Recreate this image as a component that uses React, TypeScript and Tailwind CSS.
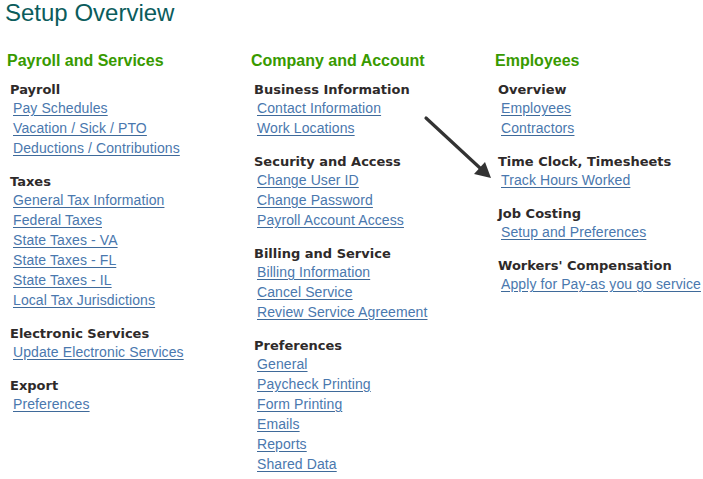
import React from "react";

type Group = { title: string; links: string[] };
type Column = { title: string; groups: Group[] };

const columns: Column[] = [
  {
    title: "Payroll and Services",
    groups: [
      { title: "Payroll", links: ["Pay Schedules", "Vacation / Sick / PTO", "Deductions / Contributions"] },
      {
        title: "Taxes",
        links: [
          "General Tax Information",
          "Federal Taxes",
          "State Taxes - VA",
          "State Taxes - FL",
          "State Taxes - IL",
          "Local Tax Jurisdictions",
        ],
      },
      { title: "Electronic Services", links: ["Update Electronic Services"] },
      { title: "Export", links: ["Preferences"] },
    ],
  },
  {
    title: "Company and Account",
    groups: [
      { title: "Business Information", links: ["Contact Information", "Work Locations"] },
      { title: "Security and Access", links: ["Change User ID", "Change Password", "Payroll Account Access"] },
      { title: "Billing and Service", links: ["Billing Information", "Cancel Service", "Review Service Agreement"] },
      {
        title: "Preferences",
        links: ["General", "Paycheck Printing", "Form Printing", "Emails", "Reports", "Shared Data"],
      },
    ],
  },
  {
    title: "Employees",
    groups: [
      { title: "Overview", links: ["Employees", "Contractors"] },
      { title: "Time Clock, Timesheets", links: ["Track Hours Worked"] },
      { title: "Job Costing", links: ["Setup and Preferences"] },
      { title: "Workers' Compensation", links: ["Apply for Pay-as you go service"] },
    ],
  },
];

export default function App() {
  return (
    <div
      className="relative w-[703px] h-[479px] bg-white overflow-hidden"
      style={{ fontFamily: '"Liberation Sans", Arial, sans-serif' }}
    >
      <h1 className="pl-[5px] text-[24px] leading-[25px] text-[#0b5c5c] font-normal">Setup Overview</h1>
      <div className="mt-[27px] pl-[7px] flex">
        {columns.map((col) => (
          <div key={col.title} className="w-[244px] shrink-0 flex flex-col">
            <h2 className="text-[16px] leading-[18px] font-bold text-[#389a00]">{col.title}</h2>
            <div className="mt-[11px] flex flex-col gap-[15px]">
              {col.groups.map((g) => (
                <div key={g.title} className="flex flex-col">
                  <h3
                    className="pl-[3px] text-[13px] leading-[17px] font-bold text-[#2e2a2a] whitespace-nowrap"
                    style={{ fontFamily: '"DejaVu Sans", Verdana, sans-serif' }}
                  >
                    {g.title}
                  </h3>
                  {g.links.map((l) => (
                    <a
                      key={l}
                      href="#"
                      className="pl-[6px] text-[14px] leading-[20px] tracking-[0.1px] text-[#4a78ae] underline decoration-[#3f6a9a] underline-offset-[2px] whitespace-nowrap self-start"
                    >
                      {l}
                    </a>
                  ))}
                </div>
              ))}
            </div>
          </div>
        ))}
      </div>
      <svg
        className="absolute left-0 top-0 pointer-events-none"
        width="703"
        height="479"
        viewBox="0 0 703 479"
      >
        <line x1="426" y1="118" x2="480" y2="168" stroke="#333" strokeWidth="3.2" strokeLinecap="round" />
        <polygon points="491,178 474,174 485,162" fill="#333" />
      </svg>
    </div>
  );
}
